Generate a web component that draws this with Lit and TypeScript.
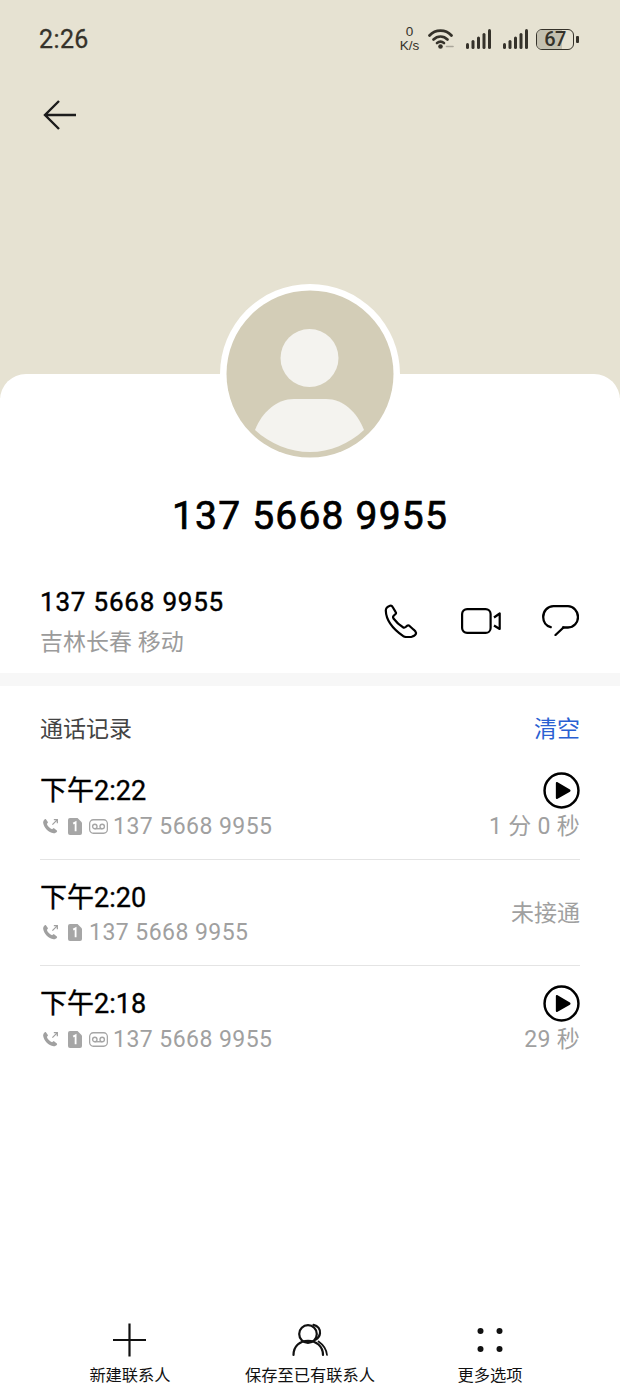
import { LitElement, html, css, svg } from "lit";
import { customElement } from "lit/decorators.js";

const NUM = "137 5668 9955";
const phoneSmall = html`<svg class="mini m-phone" width="19" height="19" viewBox="0 0 20 20"><path d="M5 2.2 7.400 5.600 6.200 7.400c.9 2.400 2.800 4.500 5.400 5.600l1.800-1.300 3.300 2.500c.4.4.4.9 0 1.400-1 1.200-2.200 1.700-3.400 1.500C7.600 16.200 3.500 12 2.300 6.400 2.100 5 2.600 3.800 3.700 2.600c.4-.5.9-.7 1.300-.4Z" fill="#a0a0a0"/><path d="M12 8 17 3M13.500 2.800H17.200V6.500" fill="none" stroke="#a0a0a0" stroke-width="1.300"/></svg>`;
const sim = html`<svg class="mini m-sim" width="14" height="17" viewBox="0 0 14 17"><path d="M2 0H9.500L14 4.500V15a2 2 0 0 1-2 2H2a2 2 0 0 1-2-2V2a2 2 0 0 1 2-2Z" fill="#a6a6a6"/><path d="M5.200 5.600 7.600 4.200V13.200" fill="none" stroke="#fff" stroke-width="1.800"/></svg>`;
const voicemail = html`<svg class="mini m-vm" width="19" height="15" viewBox="0 0 18 14"><rect x=".6" y=".6" width="16.800" height="12.800" rx="3.500" fill="none" stroke="#a6a6a6" stroke-width="1.200"/><circle cx="5.500" cy="7" r="2.100" fill="none" stroke="#a6a6a6" stroke-width="1.300"/><circle cx="12.500" cy="7" r="2.100" fill="none" stroke="#a6a6a6" stroke-width="1.300"/><path d="M5.500 9.100H12.500" stroke="#a6a6a6" stroke-width="1.300"/></svg>`;
const play = html`<svg width="37" height="37" viewBox="0 0 36 36"><circle cx="18" cy="18" r="16.500" fill="none" stroke="#000" stroke-width="2.400"/><path d="M12.500 11c0-1 .9-1.500 1.700-1l12 7c.8.500.8 1.600 0 2.100l-12 7c-.8.500-1.700 0-1.700-1Z" fill="#000"/></svg>`;
const bars = svg`<rect x="0" y="14" width="3" height="6" rx="1.500"/><rect x="5.500" y="11" width="3" height="9" rx="1.500"/><rect x="11" y="7.500" width="3" height="12.500" rx="1.500"/><rect x="16.500" y="4" width="3" height="16" rx="1.500"/><rect x="22" y="0" width="3" height="20" rx="1.500"/>`;

interface Call { time: string; vm: boolean; right: string; play: boolean }
const calls: Call[] = [
  { time: "下午2:22", vm: true, right: "1 分 0 秒", play: true },
  { time: "下午2:20", vm: false, right: "未接通", play: false },
  { time: "下午2:18", vm: true, right: "29 秒", play: true },
];

@customElement("app-root")
export class AppRoot extends LitElement {
  static styles = css`
    :host { display: block; width: 620px; height: 1400px; background: #fff; overflow: hidden;
      font-family: Roboto, "Noto Sans CJK SC", sans-serif; color: #000; }
    .page { height: 1400px; display: flex; flex-direction: column; }
    .hero { height: 398px; flex: none; background: #e6e2d2; box-sizing: border-box; padding: 0 41px 0 39px; }
    .status { height: 78px; display: flex; align-items: center; justify-content: space-between; }
    .clock { font-size: 25px; color: #35322a; letter-spacing: .4px; -webkit-text-stroke: .3px #35322a; }
    .sys { display: flex; align-items: center; }
    .speed { font-size: 13.500px; line-height: 14px; text-align: center; color: #35322a; width: 21px; margin-right: 8px; font-family: "Liberation Sans", sans-serif; }
    .wifi { margin-right: 12px; }
    .bars { fill: #35322a; margin-right: 12px; }
    .bars.last { margin-right: 8px; }
    .batt { position: relative; width: 38px; height: 21px; box-sizing: border-box; border: 1.800px solid #35322a; border-radius: 6px; overflow: hidden; }
    .fill { height: 100%; background: #c4c0b0; }
    .pct { position: absolute; inset: 0; display: flex; align-items: center; justify-content: center; font-size: 20px; font-weight: 500; letter-spacing: -.6px; color: #35322a; }
    .nub { width: 3px; height: 7px; background: #35322a; border-radius: 1px; margin-left: 2px; }
    .back { display: block; margin: 21px 0 0 4px; }
    .card { flex: 1; margin-top: -24px; background: #fff; border-radius: 26px 26px 0 0; display: flex; flex-direction: column; min-height: 0; }
    .avatar { align-self: center; margin-top: -90px; width: 180px; height: 180px; flex: none; }
    .title { margin-top: 29px; text-align: center; font-size: 39px; line-height: 46px; letter-spacing: 1.200px; -webkit-text-stroke: .7px #000; }
    .contact { margin-top: 46px; padding: 0 41px; display: flex; align-items: center; justify-content: space-between; }
    .num { font-size: 26px; line-height: 34px; letter-spacing: .8px; -webkit-text-stroke: .45px #000; margin-left: -1px; }
    .loc { margin: 9px 0 0 -1px; font-size: 23px; line-height: 30px; color: #9b9b9b; }
    .acts { display: flex; align-items: center; margin-top: -2px; }
    .i-phone { margin-right: 43px; }
    .i-video { margin-right: 41px; }
    .band { height: 13px; flex: none; background: #f7f7f7; margin-top: 15px; }
    .log { padding: 0 40px; }
    .loghead { height: 82px; display: flex; align-items: center; justify-content: space-between; margin-bottom: -15px; font-size: 23px; color: #444; }
    .clear { color: #2a5fd2; }
    .row { height: 106.500px; box-sizing: border-box; display: flex; justify-content: space-between; border-bottom: 1px solid #e4e4e4; padding-top: 21px; }
    .row:last-child { border-bottom: none; }
    .time { font-size: 27px; line-height: 34px; -webkit-text-stroke: .35px #000; }
    .meta { display: flex; align-items: center; margin-top: 3px; height: 30px; color: #a0a0a0; font-size: 23px; letter-spacing: .45px; }
    .mini { flex: none; }
    .m-phone { margin: 0 8px 0 1px; }
    .m-sim { margin-right: 7px; }
    .m-vm { margin-right: 5px; }
    .right { display: flex; flex-direction: column; align-items: flex-end; color: #a0a0a0; font-size: 23px; margin-top: -2px; }
    .right svg { display: block; }
    .dur { margin-top: 3px; line-height: 30px; letter-spacing: .3px; }
    .plain { margin-top: 20px; line-height: 30px; }
    .foot { margin-top: auto; height: 80px; flex: none; display: grid; grid-template-columns: repeat(3, 180px); padding-left: 40px; }
    .tool { display: flex; flex-direction: column; align-items: center; font-size: 16.250px; line-height: 22px; color: #111; }
    .tool svg { display: block; margin-bottom: 5px; }
  `;

  render() {
    return html`<div class="page">
      <div class="hero">
        <div class="status">
          <div class="clock">2:26</div>
          <div class="sys">
            <div class="speed">0<br />K/s</div>
            <svg class="wifi" width="26" height="20" viewBox="0 0 26 20" fill="none" stroke="#35322a" stroke-width="2.700" stroke-linecap="round"><path d="M1.500 6.500C7.500 0 17.500 0 23.500 6.500"/><path d="M5.500 10.500C9.500 6.500 15.500 6.500 19.500 10.500"/><path d="M9 14c2-1.500 5-1.500 7 0"/><circle cx="12.500" cy="17.500" r="2.300" fill="#35322a" stroke="none"/><path d="M18.500 17.500h6.500" stroke="#aaa69a" stroke-width="1.600"/></svg>
            <svg class="bars" width="25" height="20" viewBox="0 0 25 20">${bars}</svg>
            <svg class="bars last" width="25" height="20" viewBox="0 0 25 20">${bars}</svg>
            <div class="batt"><div class="fill" style="width:70%"></div><div class="pct">67</div></div>
            <div class="nub"></div>
          </div>
        </div>
        <svg class="back" width="34" height="32" viewBox="0 0 34 32" fill="none" stroke="#1c1c1c" stroke-width="2.400"><path d="M33 16H2M16 2 2 16l14 14"/></svg>
      </div>
      <div class="card">
        <svg class="avatar" viewBox="0 0 180 180">
          <path d="M0 90a90 90 0 0 1 180 0Z" fill="#fff"/>
          <circle cx="90" cy="90" r="83.500" fill="#d3cdb7"/>
          <circle cx="89.500" cy="74" r="29" fill="#f4f3ef"/>
          <path d="M35 146C42 128 57 115 74 115H106C123 115 137 128 144 146 129 160 110 168 90 168S50 160 35 146Z" fill="#f4f3ef"/>
        </svg>
        <div class="title">${NUM}</div>
        <div class="contact">
          <div>
            <div class="num">${NUM}</div>
            <div class="loc">吉林长春 移动</div>
          </div>
          <div class="acts">
            <svg class="i-phone" width="34" height="34" viewBox="0 0 34 34" fill="none" stroke="#000" stroke-width="2.200" stroke-linejoin="round"><path d="M6 1.700C3.500 2.500 1.800 4 1.800 6.500 2 16 9 25 19.300 32.200c3 1.200 6.500 1 8.400.5 2.500-.8 4.600-2.200 4.300-3.900-.3-1-1-2-2.300-3.100l-4.400-4c-1-.7-2-.6-3.300 1-1.200 1.100-2 1.100-3 .5C15.500 21.200 11 16.500 9.500 14.500c-.6-1-.6-2 .2-2.800l1.800-1.700c.6-.6.700-1.200.2-1.900L8.500 2.800C8 1.800 7 1.400 6 1.700Z"/></svg>
            <svg class="i-video" width="40" height="26" viewBox="0 0 40 26" fill="none" stroke="#000" stroke-width="2.200" stroke-linejoin="round"><rect x="1.100" y="1.100" width="28.500" height="23.800" rx="5"/><path d="M33 9.500 38.700 5.500V21L33 17.500"/></svg>
            <svg width="37" height="31" viewBox="0 0 37 31" fill="none" stroke="#000" stroke-width="2.300" stroke-linecap="round" stroke-linejoin="round"><path d="M21 22.500H26C32 22.500 36 17.500 36 12S31.500 1.200 26 1.200H11.500C5.500 1.200 1.200 6 1.200 12c0 5 3 9 7.500 10.200"/><path d="M21.500 22.500 13.500 30"/></svg>
          </div>
        </div>
        <div class="band"></div>
        <div class="log">
          <div class="loghead"><span>通话记录</span><span class="clear">清空</span></div>
          ${calls.map(
            (c) => html`<div class="row">
              <div>
                <div class="time">${c.time}</div>
                <div class="meta">${phoneSmall}${sim}${c.vm ? voicemail : ""}<span>${NUM}</span></div>
              </div>
              <div class="right">
                ${c.play
                  ? html`${play}<div class="dur">${c.right}</div>`
                  : html`<div class="plain">${c.right}</div>`}
              </div>
            </div>`,
          )}
        </div>
        <div class="foot">
          <div class="tool">
            <svg width="40" height="40" viewBox="0 0 40 40" stroke="#111" stroke-width="2.200"><path d="M19.500 3.500V36.500M3 20H36"/></svg>
            <span>新建联系人</span>
          </div>
          <div class="tool">
            <svg width="40" height="40" viewBox="0 0 40 40" fill="none" stroke="#111" stroke-width="2.200" stroke-linecap="round"><circle cx="18" cy="14" r="8.800"/><path d="M3.500 35C3.500 26 10 20.800 18 20.800S33 26 33 35"/><path d="M23.500 4.800c4.500.8 7 4.500 6.500 8.500-.3 2.500-1.800 4.800-4.300 6.300"/><path d="M28.500 21.500C33.500 25 36.500 29 37 35" stroke-width="1.700"/></svg>
            <span>保存至已有联系人</span>
          </div>
          <div class="tool">
            <svg width="40" height="40" viewBox="0 0 40 40" fill="#111"><circle cx="10.500" cy="11" r="3"/><circle cx="29.500" cy="11" r="3"/><circle cx="10.500" cy="29" r="3"/><circle cx="29.500" cy="29" r="3"/></svg>
            <span>更多选项</span>
          </div>
        </div>
      </div>
    </div>`;
  }
}
